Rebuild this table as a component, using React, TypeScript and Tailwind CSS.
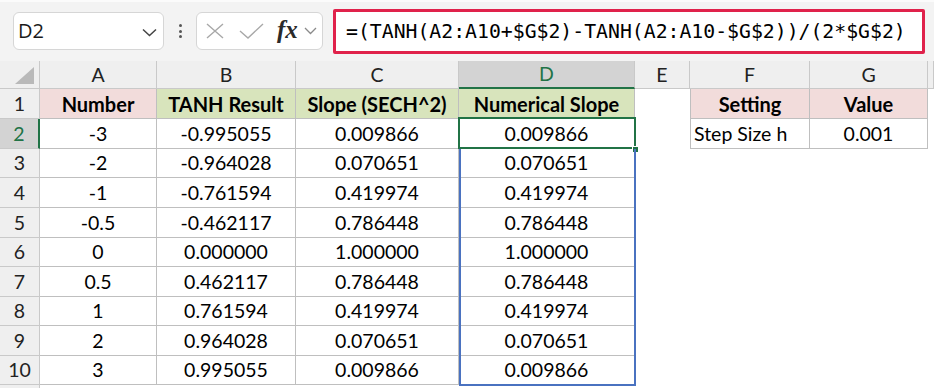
import React from 'react'

const letters = ['A', 'B', 'C', 'D', 'E', 'F', 'G', '']

const data = [
  ['-3', '-0.995055', '0.009866', '0.009866'],
  ['-2', '-0.964028', '0.070651', '0.070651'],
  ['-1', '-0.761594', '0.419974', '0.419974'],
  ['-0.5', '-0.462117', '0.786448', '0.786448'],
  ['0', '0.000000', '1.000000', '1.000000'],
  ['0.5', '0.462117', '0.786448', '0.786448'],
  ['1', '0.761594', '0.419974', '0.419974'],
  ['2', '0.964028', '0.070651', '0.070651'],
  ['3', '0.995055', '0.009866', '0.009866'],
]

const cellFont = "font-['Lato',sans-serif] text-[19.5px] text-black"

function Toolbar() {
  return (
    <div className="h-[61px] flex items-start pt-[7px] bg-[#f3f3f3] border-t-2 border-[#fbfbfb]">
      {/* name box */}
      <div className="ml-[13px] mt-[3px] w-[151px] h-[38px] bg-white border border-[#d6d6d6] rounded-md flex items-center pl-[4px] pr-[6px]">
        <span className="font-['Open_Sans',sans-serif] text-[20px] text-[#1a1a1a] flex-1">D2</span>
        <svg width="15" height="9" viewBox="0 0 15 9" className="mt-[2px]">
          <path d="M1 1.5 L7.5 7.5 L14 1.5" fill="none" stroke="#444" strokeWidth="1.5" />
        </svg>
      </div>
      {/* dots */}
      <div className="w-[32px] h-[38px] mt-[3px] flex flex-col items-center justify-center gap-[2.5px]">
        <span className="w-[3px] h-[3px] rounded-full bg-[#555]" />
        <span className="w-[3px] h-[3px] rounded-full bg-[#555]" />
        <span className="w-[3px] h-[3px] rounded-full bg-[#555]" />
      </div>
      {/* fx box */}
      <div className="mt-[3px] w-[127px] h-[38px] bg-white border border-[#d6d6d6] rounded-md flex items-center pl-[9px]">
        <svg width="18" height="16" viewBox="0 0 18 16">
          <path d="M1 1 L17 15 M17 1 L1 15" stroke="#a8a8a8" strokeWidth="1.4" fill="none" />
        </svg>
        <svg width="25" height="16" viewBox="0 0 25 16" className="ml-[15px]">
          <path d="M1 8 L9 15 L24 1" stroke="#a8a8a8" strokeWidth="1.4" fill="none" />
        </svg>
        <span className="ml-[13px] font-['Liberation_Serif',serif] italic font-bold text-[25px] leading-none text-[#2a2a2a] -mt-[3px]">
          fx
        </span>
        <svg width="13" height="8" viewBox="0 0 13 8" className="ml-[6px]">
          <path d="M1 1 L6.5 6.5 L12 1" fill="none" stroke="#8a8a8a" strokeWidth="1.3" />
        </svg>
      </div>
      {/* formula */}
      <div className="ml-[10px] w-[592px] h-[45px] border-[3px] border-[#e0224b] rounded-[2px] bg-white flex items-center pl-[10px]">
        <span className="font-['DejaVu_Sans_Mono',monospace] text-[19.8px] text-black whitespace-nowrap">
          =(TANH(A2:A10+$G$2)-TANH(A2:A10-$G$2))/(2*$G$2)
        </span>
      </div>
    </div>
  )
}

function Sheet() {
  const cells: React.ReactNode[] = []

  // column header row
  cells.push(
    <div key="corner" className="bg-[#efefef] border-r border-b border-[#c9c9c9] flex items-end justify-end pr-[5px] pb-[4px]">
      <svg width="19" height="17" viewBox="0 0 19 17">
        <path d="M19 0 L19 17 L0 17 Z" fill="#b9b9b9" />
      </svg>
    </div>
  )
  letters.forEach((l, i) => {
    const sel = l === 'D'
    cells.push(
      <div
        key={'h' + i}
        className={
          sel
            ? "bg-[#d3d3d3] border-r border-[#c9c9c9] border-b-2 border-b-[#217346] flex items-center justify-center font-['Lato',sans-serif] text-[19.5px] text-[#217346]"
            : "bg-[#efefef] border-r border-b border-[#c9c9c9] flex items-center justify-center font-['Lato',sans-serif] text-[19.5px] text-[#222]"
        }
      >
        {l}
      </div>
    )
  })

  // row 1
  const head = ['Number', 'TANH Result', 'Slope (SECH^2)', 'Numerical Slope']
  const headBg = ['bg-[#f2dcdb]', 'bg-[#d8e4bc]', 'bg-[#d8e4bc]', 'bg-[#d8e4bc]']
  cells.push(
    <div key="r1" className="bg-[#efefef] border-r border-b border-[#c9c9c9] flex items-center justify-center font-['Lato',sans-serif] text-[19.5px] text-[#222]">
      1
    </div>
  )
  head.forEach((h, i) => {
    cells.push(
      <div
        key={'r1c' + i}
        className={`${headBg[i]} border-r border-b border-[#bfbfbf] flex items-center justify-center font-['Lato',sans-serif] font-bold text-[20px] text-black whitespace-nowrap`}
      >
        {h}
      </div>
    )
  })
  cells.push(<div key="r1e" className="bg-white" />)
  cells.push(
    <div key="r1f" className="bg-[#f2dcdb] border-l border-r border-b border-[#bfbfbf] flex items-center justify-center font-['Lato',sans-serif] font-bold text-[20px] text-black">
      Setting
    </div>
  )
  cells.push(
    <div key="r1g" className="bg-[#f2dcdb] border-r border-b border-[#bfbfbf] flex items-center justify-center font-['Lato',sans-serif] font-bold text-[20px] text-black">
      Value
    </div>
  )
  cells.push(<div key="r1h" className="bg-white" />)

  // data rows
  data.forEach((row, r) => {
    const n = r + 2
    const sel = n === 2
    cells.push(
      <div
        key={'rh' + n}
        className={
          sel
            ? "bg-[#d3d3d3] border-b border-[#c9c9c9] border-r-2 border-r-[#217346] flex items-center justify-center font-['Lato',sans-serif] text-[19.5px] text-[#217346]"
            : "bg-[#efefef] border-r border-b border-[#c9c9c9] flex items-center justify-center font-['Lato',sans-serif] text-[19.5px] text-[#222]"
        }
      >
        {n}
      </div>
    )
    row.forEach((v, c) => {
      cells.push(
        <div key={`d${n}-${c}`} className={`bg-white border-r border-b border-[#bfbfbf] flex items-center justify-center ${cellFont}`}>
          {v}
        </div>
      )
    })
    cells.push(<div key={'e' + n} className="bg-white" />)
    if (n === 2) {
      cells.push(
        <div key="f2" className={`bg-white border-l border-r border-b border-[#bfbfbf] flex items-center pl-[3px] whitespace-nowrap ${cellFont}`}>
          Step Size h
        </div>
      )
      cells.push(
        <div key="g2" className={`bg-white border-r border-b border-[#bfbfbf] flex items-center justify-center ${cellFont}`}>
          0.001
        </div>
      )
    } else {
      cells.push(<div key={'f' + n} className="bg-white" />)
      cells.push(<div key={'g' + n} className="bg-white" />)
    }
    cells.push(<div key={'h' + n} className="bg-white" />)
  })

  // row 11 header, only its top edge is in view
  cells.push(<div key="rh11" className="bg-[#efefef] border-r border-[#c9c9c9]" />)

  return (
    <div className="relative">
      <div className="grid grid-cols-[40px_117px_139px_163px_176px_55px_120px_118px_1fr] grid-rows-[28px_30px_30px_29px_30px_30px_29px_30px_29px_30px_29px_30px_30px]">
        {cells}
      </div>
      {/* active cell D2 */}
      <div className="absolute left-[458px] top-[56px] w-[178px] h-[32px] border-2 border-[#217346]" />
      <div className="absolute left-[632px] top-[85px] w-[7px] h-[7px] bg-[#217346] border border-white" />
      {/* spill range D3:D10 */}
      <div className="absolute left-[459px] top-[88px] w-[177px] h-[237px] border-2 border-t-0 border-[#4a72c0]" />
    </div>
  )
}

export default function App() {
  return (
    <div className="w-[934px] h-[388px] overflow-hidden bg-white">
      <Toolbar />
      <Sheet />
    </div>
  )
}
